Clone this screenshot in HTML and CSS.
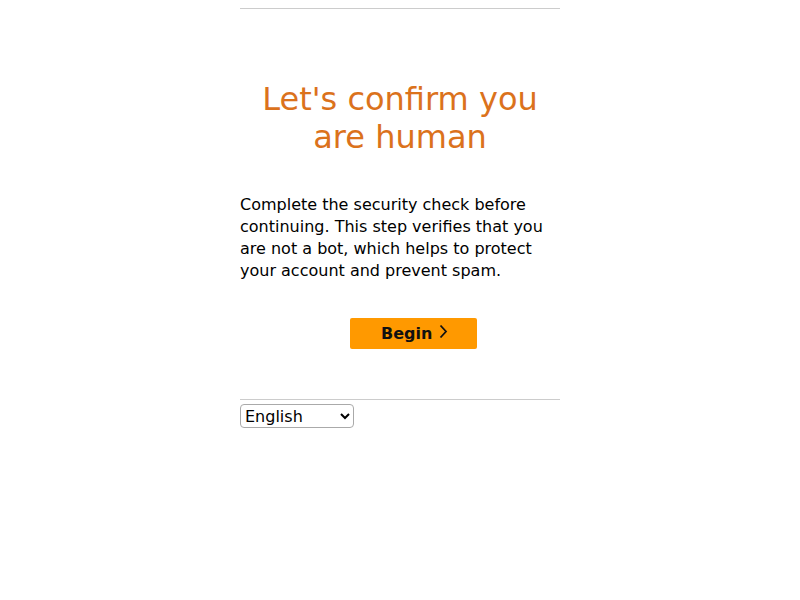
FILE: index.html
```html
<!DOCTYPE html>
<html lang="en">
<head>
    <meta charset="UTF-8">
    <title>Security check</title>
    <link rel="stylesheet" href="styles.css">
</head>
<body>
    <div id="container">
        <h1>Let's confirm you are human</h1>
        <p class="intro">Complete the security check before continuing. This step verifies that you are not a bot, which helps to protect your account and prevent spam.</p>
        <div class="actions">
            <button class="begin">Begin <svg width="10" height="15" viewBox="0 0 10 15"><path d="M2.5 1.5 L8 7.5 L2.5 13.5" fill="none" stroke="#111" stroke-width="1.8"/></svg></button>
        </div>
        <div id="footer">
            <select>
                <option>English</option>
            </select>
        </div>
    </div>
</body>
</html>
```

FILE: styles.css
```css
body {
    margin: 8px;
    font-family: "DejaVu Sans", sans-serif;
    background: white;
    color: #000;
}
#container {
    width: 320px;
    margin: 0 auto;
    border-top: 1px solid #ccc;
}
h1 {
    color: #db721c;
    font-size: 32px;
    font-weight: normal;
    line-height: 38px;
    text-align: center;
    margin: 71px 0 0 0;
    padding: 0 16px;
}
.intro {
    font-size: 16px;
    line-height: 22px;
    margin: 38px 0 0 0;
}
.actions {
    text-align: center;
    margin-top: 36px;
    padding-left: 27px;
}
.begin {
    background: #ff9900;
    border: none;
    border-radius: 2px;
    font-family: "DejaVu Sans", sans-serif;
    font-weight: bold;
    font-size: 16px;
    color: #111;
    width: 127px;
    height: 31px;
    padding: 0 0 0 2px;
}
.begin svg {
    vertical-align: 0;
}
#footer {
    margin-top: 50px;
    border-top: 1px solid #ccc;
    padding-top: 4px;
}
select {
    font-family: "DejaVu Sans", sans-serif;
    font-size: 16px;
    width: 114px;
    height: 24px;
    border: 1px solid #aaa;
    border-radius: 4px;
    background: white;
    color: #000;
}
```
